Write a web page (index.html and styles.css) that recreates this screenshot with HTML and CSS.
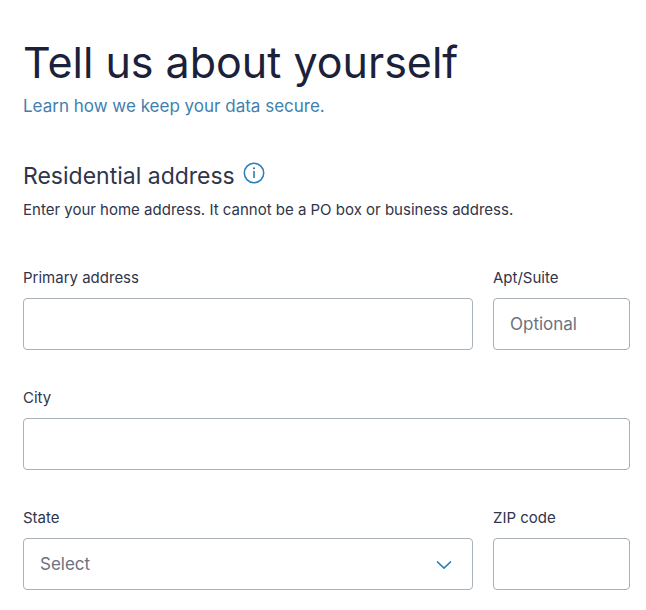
FILE: index.html
```html
<!DOCTYPE html>
<html lang="en">
<head>
    <meta charset="UTF-8">
    <meta name="viewport" content="width=device-width, initial-scale=1.0">
    <title>Tell us about yourself</title>
    <link rel="stylesheet" href="styles.css">
</head>
<body>
    <main class="page">
        <h1 class="title">Tell us about yourself</h1>
        <a class="secure-link" href="#">Learn how we keep your data secure.</a>

        <div class="section-header">
            <h2 class="section-title">Residential address</h2>
            <button class="info-button" type="button" aria-label="More information">
                <svg width="22" height="22" viewBox="0 0 22 22" fill="none" stroke="currentColor">
                    <circle cx="11" cy="11" r="9.7" stroke-width="1.5"/>
                    <path d="M11 9V16" stroke-width="1.6"/>
                    <circle cx="11" cy="6.3" r="1.1" fill="currentColor" stroke="none"/>
                </svg>
            </button>
        </div>
        <p class="section-text">Enter your home address. It cannot be a PO box or business address.</p>

        <form class="address-form">
            <div class="form-group">
                <label for="address">Primary address</label>
                <input type="text" id="address">
            </div>
            <div class="form-group">
                <label for="apt">Apt/Suite</label>
                <input type="text" id="apt" placeholder="Optional">
            </div>
            <div class="form-group full">
                <label for="city">City</label>
                <input type="text" id="city">
            </div>
            <div class="form-group">
                <label for="state">State</label>
                <div class="select-wrap">
                    <select id="state">
                        <option value="">Select</option>
                        <option>California</option>
                        <option>New York</option>
                        <option>Texas</option>
                    </select>
                    <svg class="chevron" width="16" height="10" viewBox="0 0 16 10" fill="none" stroke="currentColor" stroke-width="1.6">
                        <path d="M1 1.5L8 8.2L15 1.5"/>
                    </svg>
                </div>
            </div>
            <div class="form-group">
                <label for="zip">ZIP code</label>
                <input type="text" id="zip">
            </div>
        </form>
    </main>
</body>
</html>
```
FILE: styles.css
```css
* {
    box-sizing: border-box;
}

body {
    margin: 0;
    background-color: #fff;
    color: #30354a;
    font-family: Inter, Arial, sans-serif;
}

.page {
    padding: 32px 16px 20px 23px;
}

.title {
    margin: 0;
    color: #1b213b;
    font-size: 43px;
    line-height: 60px;
    font-weight: 400;
}

.secure-link {
    display: block;
    color: #417faf;
    font-size: 17px;
    line-height: 28px;
    text-decoration: none;
}

.section-header {
    display: flex;
    align-items: center;
    gap: 8px;
    margin-top: 40px;
}

.section-title {
    margin: 0;
    font-size: 23px;
    line-height: 32px;
    font-weight: 400;
}

.info-button {
    display: flex;
    margin-bottom: 6px;
    padding: 0;
    border: none;
    background: none;
    color: #2b7db5;
    cursor: pointer;
}

.section-text {
    margin: 6px 0 44px;
    font-size: 15px;
    line-height: 24px;
}

.address-form {
    display: grid;
    grid-template-columns: 1fr 137px;
    gap: 36px 20px;
}

.full {
    grid-column: 1 / -1;
}

.form-group label {
    display: block;
    margin-bottom: 8px;
    font-size: 15px;
    line-height: 24px;
}

.form-group input,
.form-group select {
    display: block;
    width: 100%;
    height: 52px;
    padding: 0 16px;
    border: 1px solid #a9b2b8;
    border-radius: 4px;
    background-color: #fff;
    color: #6b7180;
    font-family: inherit;
    font-size: 17px;
}

.form-group select {
    appearance: none;
}

.form-group input::placeholder {
    color: #6b7180;
}

.select-wrap {
    position: relative;
}

.chevron {
    position: absolute;
    top: 22px;
    right: 21px;
    color: #2b7db5;
    pointer-events: none;
}
```
